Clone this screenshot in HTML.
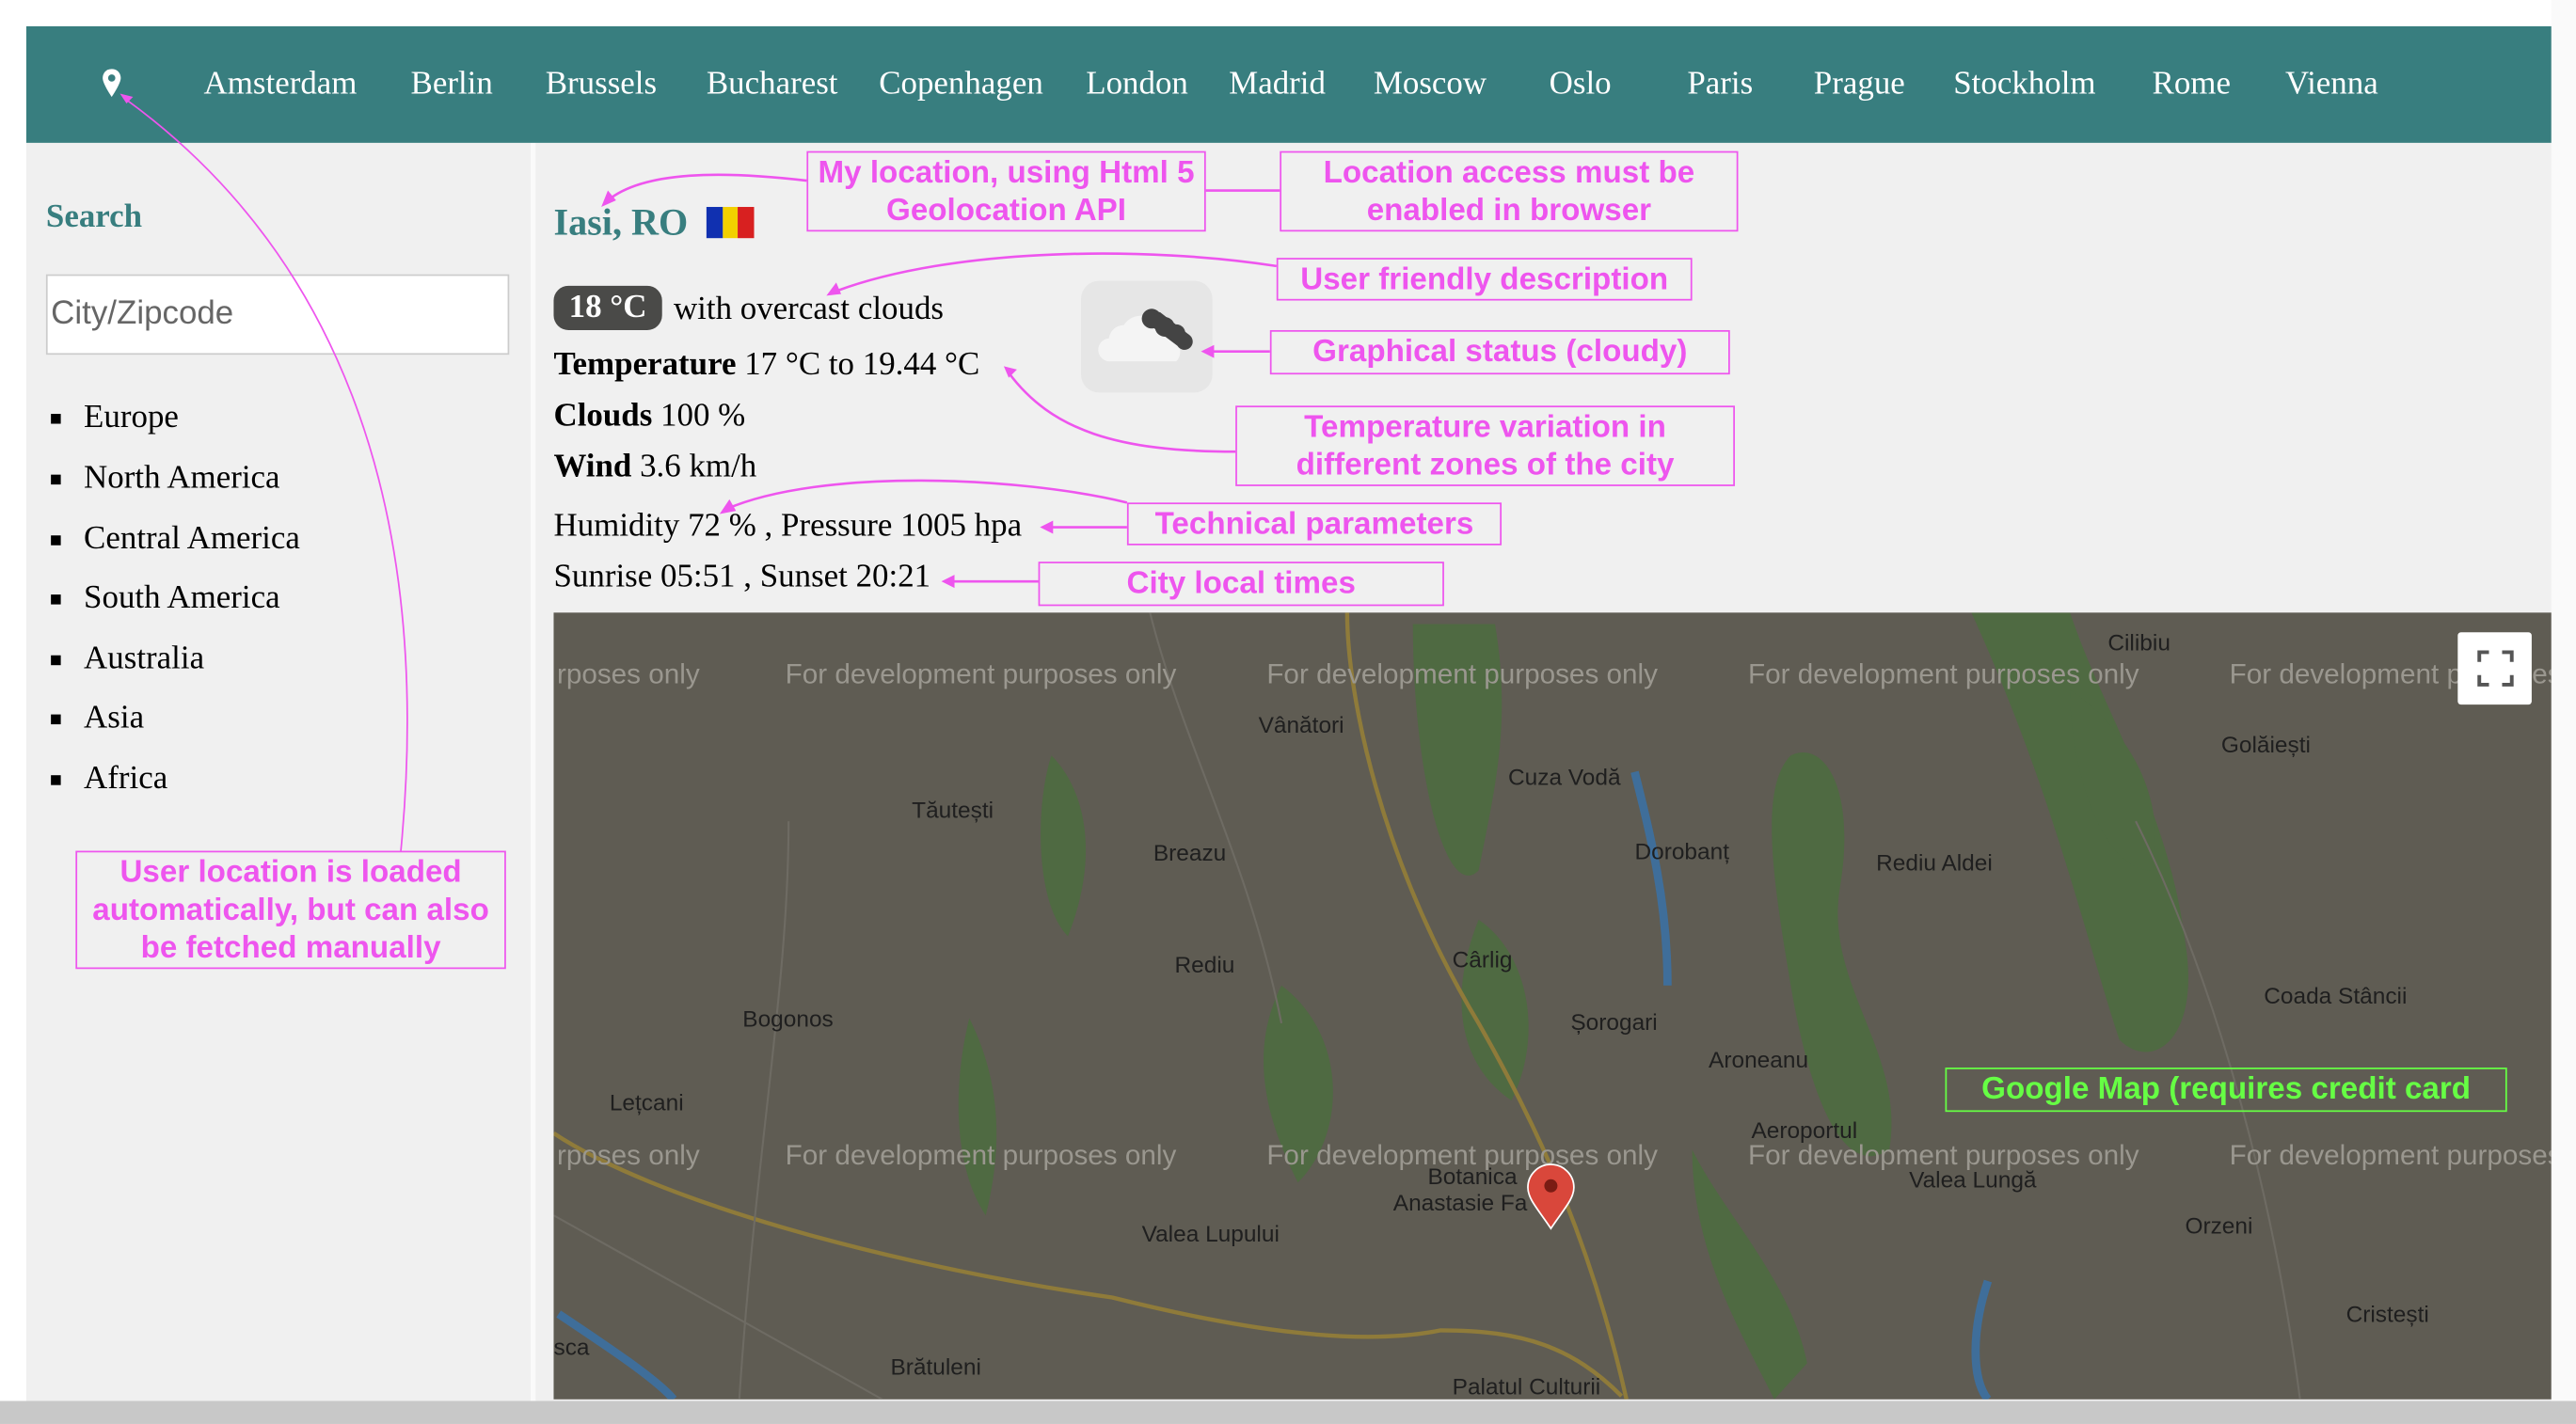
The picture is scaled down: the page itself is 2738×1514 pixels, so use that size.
<!DOCTYPE html>
<html><head><meta charset="utf-8">
<style>
html,body{margin:0;padding:0;width:2738px;height:1514px;overflow:hidden;background:#fff}
#w{position:absolute;left:0;top:0;width:1568px;height:867px;transform:scale(1.7462);transform-origin:0 0;font-family:"Liberation Serif",serif}
.abs{position:absolute}
#nav{left:16px;top:16px;width:1537px;height:71px;background:#387e7f}
.ni{position:absolute;top:40px;color:#fff;font-size:20px;line-height:22px;white-space:nowrap}
#side{left:16px;top:87px;width:307px;height:766px;background:#f0f0f0}
#div{left:323px;top:87px;width:3px;height:766px;background:#fafafa}
#main{left:326px;top:87px;width:1227px;height:766px;background:#f0f0f0}
.li{position:absolute;left:51px;font-size:20px;color:#000;line-height:22px}
.li:before{content:"";position:absolute;left:-20px;top:9px;width:6px;height:6px;background:#000}
.t{position:absolute;left:337px;font-size:20px;line-height:22px;color:#000;white-space:nowrap}
.box{position:absolute;border:1.5px solid #ee55ee;color:#ee55ee;font-family:"Liberation Sans",sans-serif;font-weight:bold;font-size:19px;line-height:23px;text-align:center;box-sizing:border-box;display:flex;align-items:center;justify-content:center}
.wm{font-family:"Liberation Sans",sans-serif;font-size:17px;fill:#9a978f}
.ml{font-family:"Liberation Sans",sans-serif;font-size:14px;fill:#1f1f1f}
</style></head><body><div id="w">
<div id="nav" class="abs"></div>
<svg class="abs" style="left:60px;top:41px" width="16" height="20" viewBox="0 0 16 20"><path d="M8 1C4.5 1 2.5 3.6 2.5 6.5C2.5 10 8 18 8 18S13.5 10 13.5 6.5C13.5 3.6 11.5 1 8 1Z" fill="#fff"/><circle cx="8" cy="6.5" r="2.2" fill="#387e7f"/></svg>
<span class="ni" style="left:124px">Amsterdam</span>
<span class="ni" style="left:250px">Berlin</span>
<span class="ni" style="left:332px">Brussels</span>
<span class="ni" style="left:430px">Bucharest</span>
<span class="ni" style="left:535px">Copenhagen</span>
<span class="ni" style="left:661px">London</span>
<span class="ni" style="left:748px">Madrid</span>
<span class="ni" style="left:836px">Moscow</span>
<span class="ni" style="left:943px">Oslo</span>
<span class="ni" style="left:1027px">Paris</span>
<span class="ni" style="left:1104px">Prague</span>
<span class="ni" style="left:1189px">Stockholm</span>
<span class="ni" style="left:1310px">Rome</span>
<span class="ni" style="left:1391px">Vienna</span>

<div id="side" class="abs"></div><div id="div" class="abs"></div><div id="main" class="abs"></div>
<div class="abs" style="left:28px;top:121px;font-size:20px;font-weight:bold;color:#387e7f">Search</div>
<div class="abs" style="left:28px;top:167px;width:282px;height:49px;background:#fff;border:1px solid #ccc;box-sizing:border-box;font-family:'Liberation Sans',sans-serif;font-size:20px;color:#666;line-height:47px;padding-left:2px">City/Zipcode</div>
<div class="li" style="top:243px">Europe</div>
<div class="li" style="top:280px">North America</div>
<div class="li" style="top:317px">Central America</div>
<div class="li" style="top:353px">South America</div>
<div class="li" style="top:390px">Australia</div>
<div class="li" style="top:426px">Asia</div>
<div class="li" style="top:463px">Africa</div>

<div class="abs" style="left:337px;top:123px;font-size:23px;font-weight:bold;color:#387e7f">Iasi, RO</div>
<div class="abs" style="left:430px;top:126px;width:29px;height:19px;display:flex"><div style="flex:1;background:#1030b0"></div><div style="flex:1;background:#f2d000"></div><div style="flex:1;background:#d82020"></div></div>
<div class="abs" style="left:337px;top:174px;width:66px;height:27px;background:#4a4a48;border-radius:9px;color:#fff;font-weight:bold;font-size:20px;line-height:27px;text-align:center">18 °C</div>
<div class="t" style="left:410px;top:177px">with overcast clouds</div>
<div class="t" style="top:211px"><b>Temperature</b> 17 °C to 19.44 °C</div>
<div class="t" style="top:242px"><b>Clouds</b> 100 %</div>
<div class="t" style="top:273px"><b>Wind</b> 3.6 km/h</div>
<div class="t" style="top:309px">Humidity 72 % , Pressure 1005 hpa</div>
<div class="t" style="top:340px">Sunrise 05:51 , Sunset 20:21</div>
<div class="abs" style="left:658px;top:171px;width:80px;height:68px;background:#e6e6e6;border-radius:11px"></div>
<svg class="abs" style="left:658px;top:171px" width="80" height="68" viewBox="0 0 80 68">
<path d="M18 49a7 7 0 0 1 -1-14a9 9 0 0 1 9-8a12 12 0 0 1 22 4a9 9 0 0 1 12 10a8 8 0 0 1 -2 8z" fill="#f4f4f4"/>
<g fill="#444"><circle cx="43" cy="23" r="6"/><circle cx="51" cy="28" r="6"/><circle cx="58" cy="32" r="5.5"/><circle cx="63" cy="37" r="5"/><path d="M38 24l10-5l18 14l-4 9z"/></g>
</svg>

<div class="abs" style="left:337px;top:373px;width:1216px;height:479px;background:#5f5c53;overflow:hidden">
<svg width="1216" height="479" viewBox="337 373 1216 479">
<g fill="#4f6a42">
<path d="M1200 373h60c20 60 60 120 70 200c10 60 -20 80 -40 60c-20-60-40-150-90-260z"/>
<path d="M1090 460c20-10 40 20 30 80c-10 60 40 100 30 160c-30 20-50-40-60-100c-10-60-20-120 0-140z"/>
<path d="M860 380h50c10 60 0 100 -10 150c-20 20-40-60-40-150z"/>
<path d="M1030 700c20 40 60 80 70 130l-20 22c-20-40-50-90-50-152z"/>
<path d="M640 460c20 20 30 60 10 110c-20-20-20-80-10-110z"/>
<path d="M780 600c40 30 40 90 10 120c-20-40-30-80-10-120z"/>
<path d="M1260 420c30 20 60 60 50 110c-30 0-50-60-50-110z"/>
<path d="M900 560c30 20 40 70 20 110c-30-20-40-60-20-110z"/>
<path d="M590 620c20 40 20 80 10 120c-20-30-20-80-10-120z"/>
</g>
<g fill="none" stroke="#3f6e9a" stroke-width="5"><path d="M995 470c10 40 20 80 20 130"/><path d="M1210 780c-10 30-10 60 0 72"/><path d="M340 800c30 20 60 40 70 52"/></g>
<g fill="none" stroke="#8f7b3a" stroke-width="2.5"><path d="M820 373c0 50 20 150 80 250c40 70 70 140 90 229"/><path d="M337 690c60 40 200 80 340 100c80 20 150 30 200 20c50 0 80 10 110 40"/></g>
<g fill="none" stroke="#6e6b63" stroke-width="1.2"><path d="M700 373c20 80 60 150 80 250"/><path d="M337 740l200 112"/><path d="M1300 500c40 80 80 200 100 352"/><path d="M480 500c0 100 -20 200 -30 352"/></g>
<g class="wm"><text x="339" y="416">rposes only</text><text x="478" y="416">For development purposes only</text><text x="771" y="416">For development purposes only</text><text x="1064" y="416">For development purposes only</text><text x="1357" y="416">For development purposes</text>
<text x="339" y="709">rposes only</text><text x="478" y="709">For development purposes only</text><text x="771" y="709">For development purposes only</text><text x="1064" y="709">For development purposes only</text><text x="1357" y="709">For development purposes</text></g>
<g class="ml"><text x="1283" y="396">Cilibiu</text><text x="766" y="446">Vânători</text><text x="1352" y="458">Golăiești</text><text x="918" y="478">Cuza Vodă</text><text x="555" y="498">Tăutești</text><text x="702" y="524">Breazu</text><text x="995" y="523">Dorobanț</text><text x="1142" y="530">Rediu Aldei</text><text x="715" y="592">Rediu</text><text x="884" y="589">Cârlig</text><text x="1378" y="611">Coada Stâncii</text><text x="452" y="625">Bogonos</text><text x="956" y="627">Șorogari</text><text x="1040" y="650">Aroneanu</text><text x="371" y="676">Lețcani</text><text x="1066" y="693">Aeroportul</text><text x="869" y="721">Botanica</text><text x="1162" y="723">Valea Lungă</text><text x="848" y="737">Anastasie Fa</text><text x="695" y="756">Valea Lupului</text><text x="1330" y="751">Orzeni</text><text x="1428" y="805">Cristești</text><text x="542" y="837">Brătuleni</text><text x="884" y="849">Palatul Culturii</text><text x="337" y="825">sca</text></g>
<path d="M944 748c-8-12-14-18-14-25a14 14 0 0 1 28 0c0 7-6 13-14 25z" fill="#d9473b" stroke="#fff" stroke-width="1"/><circle cx="944" cy="722" r="4" fill="#7a1c14"/>
</svg>
<div class="abs" style="left:1159px;top:12px;width:45px;height:44px;background:#fff;border-radius:2px"></div>
<svg class="abs" style="left:1171px;top:23px" width="22" height="22" viewBox="0 0 22 22" fill="none" stroke="#555" stroke-width="2.5"><path d="M1 7V1h6M15 1h6v6M21 15v6h-6M7 21H1v-6"/></svg>
</div>

<div class="box" style="left:491px;top:92px;width:243px;height:49px">My location, using Html 5<br>Geolocation API</div>
<div class="box" style="left:779px;top:92px;width:279px;height:49px">Location access must be<br>enabled in browser</div>
<div class="box" style="left:777px;top:157px;width:253px;height:26px">User friendly description</div>
<div class="box" style="left:773px;top:201px;width:280px;height:27px">Graphical status (cloudy)</div>
<div class="box" style="left:752px;top:247px;width:304px;height:49px">Temperature variation in<br>different zones of the city</div>
<div class="box" style="left:686px;top:306px;width:228px;height:26px">Technical parameters</div>
<div class="box" style="left:632px;top:342px;width:247px;height:27px">City local times</div>
<div class="box" style="left:46px;top:518px;width:262px;height:72px">User location is loaded<br>automatically, but can also<br>be fetched manually</div>
<div class="box" style="left:1184px;top:650px;width:342px;height:27px;border-color:#66ff44;color:#66ff44">Google Map (requires credit card</div>

<svg class="abs" style="left:0;top:0" width="1568" height="867" fill="none" stroke="#ee55ee" stroke-width="1.5">
<path d="M491 110C440 104 392 104 370 122"/><path d="M734 116H779"/>
<path d="M777 162C700 150 580 150 507 178"/><path d="M773 214H736"/>
<path d="M752 275C680 275 640 262 614 227"/><path d="M686 306C620 290 500 285 442 310"/>
<path d="M686 321H638"/><path d="M632 354H578"/>
<path d="M244 518C265 300 200 150 76 60" stroke-width="1"/>
<g fill="#ee55ee" stroke="none"><path d="M366 126l4-10l5 6z"/><path d="M503 180l6-8l3 7z"/><path d="M731 214l8-4v8z"/><path d="M611 223l8 2l-5 5z"/><path d="M438 313l6-9l4 7z"/><path d="M633 321l8-4v8z"/><path d="M573 354l8-4v8z"/><path d="M73 57l8 2l-4 4z"/></g>
</svg>
<div class="abs" style="left:0;top:853px;width:1568px;height:14px;background:#c8c8c8"></div>
<div class="abs" style="left:1553px;top:0;width:15px;height:853px;background:#fafafa"></div>
</div></body></html>
